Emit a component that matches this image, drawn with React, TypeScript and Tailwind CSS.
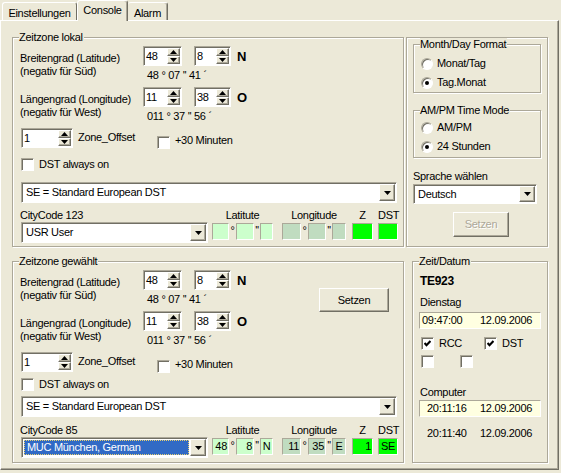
import React from "react";

const sunken =
  "border border-t-[#ACA899] border-l-[#ACA899] border-r-white border-b-white shadow-[inset_1px_1px_0_#716F64]";
const raised =
  "border border-t-white border-l-white border-r-[#716F64] border-b-[#716F64] shadow-[inset_-1px_-1px_0_#ACA899]";
const etched = "border border-[#ACA899] shadow-[inset_1px_1px_0_#fff,1px_1px_0_#fff]";
const thin = "border border-t-[#ACA899] border-l-[#ACA899] border-r-white border-b-white";

function Group({ label, className, children }: { label?: string; className: string; children?: React.ReactNode }) {
  return (
    <div className={`relative ${etched} ${className}`}>
      {label && (
        <span className="absolute -top-[7px] left-[6px] bg-[#ECE9D8] pr-[1px] leading-[13px]">{label}</span>
      )}
      {children}
    </div>
  );
}

function Tri({ up }: { up?: boolean }) {
  return (
    <svg width="7" height="4" viewBox="0 0 7 4">
      <path d={up ? "M3.5 0L7 4H0z" : "M0 0h7L3.5 4z"} fill="black" />
    </svg>
  );
}

function Spin({ value, className }: { value: string; className: string }) {
  return (
    <div className={`flex h-[20px] bg-white ${sunken} ${className}`}>
      <span className="flex-1 pl-[2px] leading-[18px]">{value}</span>
      <div className="flex flex-col w-[13px] my-[1px] mr-[1px]">
        <div className={`flex-1 flex items-center justify-center bg-[#ECE9D8] ${raised}`}>
          <Tri up />
        </div>
        <div className={`flex-1 flex items-center justify-center bg-[#ECE9D8] ${raised}`}>
          <Tri />
        </div>
      </div>
    </div>
  );
}

function Combo({ value, className, selected }: { value: string; className: string; selected?: boolean }) {
  return (
    <div className={`flex bg-white ${sunken} ${className}`}>
      {selected ? (
        <div className="flex-1 m-[2px] mr-[1px] bg-[#316AC5] text-white pl-[2px] leading-[13px] border border-dotted border-[#E8D070] overflow-hidden whitespace-nowrap">
          {value}
        </div>
      ) : (
        <span className="flex-1 pl-[4px] leading-[18px] overflow-hidden whitespace-nowrap">{value}</span>
      )}
      <div className={`w-[16px] my-[1px] mr-[1px] flex items-center justify-center bg-[#ECE9D8] ${raised}`}>
        <svg width="7" height="4" viewBox="0 0 7 4">
          <path d="M0 0h7L3.5 4z" fill="black" />
        </svg>
      </div>
    </div>
  );
}

function Check({ checked, className = "" }: { checked?: boolean; className?: string }) {
  return (
    <div className={`w-[13px] h-[13px] shrink-0 bg-white flex items-center justify-center ${sunken} ${className}`}>
      {checked && (
        <svg width="7" height="7" viewBox="0 0 7 7">
          <path d="M0.5 3L2.5 5.2L6.5 1" stroke="black" strokeWidth="2.2" fill="none" />
        </svg>
      )}
    </div>
  );
}

function Radio({ checked, label, className = "" }: { checked?: boolean; label: string; className?: string }) {
  return (
    <div className={`flex items-center h-[13px] ${className}`}>
      <div className="w-[12px] h-[12px] rounded-full bg-white border border-t-[#ACA899] border-l-[#ACA899] border-r-white border-b-white shadow-[inset_1px_1px_0_#716F64] flex items-center justify-center">
        {checked && <div className="w-[4px] h-[4px] rounded-full bg-black" />}
      </div>
      <span className="ml-[4px]">{label}</span>
    </div>
  );
}

function Cell({ className, children }: { className: string; children?: React.ReactNode }) {
  return <div className={`h-[17px] leading-[15px] px-[1px] ${thin} ${className}`}>{children}</div>;
}

function Sym({ className, children }: { className: string; children?: React.ReactNode }) {
  return <div className={`h-[17px] leading-[15px] text-center ${className}`}>{children}</div>;
}

function CoordRow({ lon, deg, button }: { lon?: boolean; deg: string; button?: boolean }) {
  return (
    <div className="flex h-[41px]">
      <div className="w-[123px] pt-[6px]">
        {lon ? "Längengrad (Longitude)" : "Breitengrad (Latitude)"}
        <br />
        {lon ? "(negativ für West)" : "(negativ für Süd)"}
      </div>
      <div className="flex flex-col w-[110px]">
        <div className="flex items-center">
          <Spin value={lon ? "11" : "48"} className="w-[39px]" />
          <Spin value={lon ? "38" : "8"} className="ml-[12px] w-[37px]" />
          <span className="ml-[6px] font-bold text-[13px] tracking-normal">{lon ? "O" : "N"}</span>
        </div>
        <div className="mt-[3px] pl-[4px]">{deg}</div>
      </div>
      {button && (
        <button className={`ml-[66px] mt-[18px] w-[70px] h-[24px] bg-[#ECE9D8] ${raised}`}>Setzen</button>
      )}
    </div>
  );
}

function CityRow({ label, city, filled }: { label: string; city: string; filled?: boolean }) {
  const lat = "bg-[#CCFFCC]";
  return (
    <div className="flex">
      <div className="flex flex-col ml-[1px]">
        <span className="-ml-[1px]">{label}</span>
        <Combo value={city} selected={filled} className="w-[187px] h-[21px]" />
      </div>
      <div className="flex flex-col ml-[4px]">
        <span className="text-center">Latitute</span>
        <div className="flex mt-[1px]">
          <Cell className={`w-[17px] text-right ${lat}`}>{filled && "48"}</Cell>
          <Sym className="w-[7px]">°</Sym>
          <Cell className={`w-[18px] text-right ${lat}`}>{filled && "8"}</Cell>
          <Sym className="w-[6px]">''</Sym>
          <Cell className={`w-[13px] text-center ${lat}`}>{filled && "N"}</Cell>
        </div>
      </div>
      <div className="flex flex-col ml-[9px]">
        <span className="text-center">Longitude</span>
        <div className="flex mt-[1px]">
          <Cell className="w-[19px] text-right bg-[#C0DCC0]">{filled && "11"}</Cell>
          <Sym className="w-[7px]">°</Sym>
          <Cell className="w-[18px] text-right bg-[#C0DCC0]">{filled && "35"}</Cell>
          <Sym className="w-[6px]">''</Sym>
          <Cell className="w-[14px] text-center bg-[#C0DCC0]">{filled && "E"}</Cell>
        </div>
      </div>
      <div className="flex flex-col ml-[6px]">
        <span className="text-center">Z</span>
        <Cell className="mt-[1px] w-[21px] text-right bg-[#00FF00]">{filled && "1"}</Cell>
      </div>
      <div className="flex flex-col ml-[5px]">
        <span className="text-center">DST</span>
        <Cell className="mt-[1px] w-[20px] text-center bg-[#00FF00]">{filled && "SE"}</Cell>
      </div>
    </div>
  );
}

function ZoneRow() {
  return (
    <div className="flex items-start h-[20px]">
      <Spin value="1" className="ml-[1px] w-[52px]" />
      <span className="ml-[5px] w-[79px] pt-[3px]">Zone_Offset</span>
      <Check className="mt-[8px]" />
      <span className="ml-[5px] mt-[6px]">+30 Minuten</span>
    </div>
  );
}

export default function App() {
  return (
    <div className="w-[561px] h-[473px] bg-[#ECE9D8] text-black text-[11px] leading-[13px] tracking-[-0.3px] font-['Liberation_Sans',Arial,sans-serif] overflow-hidden">
      {/* Tabs */}
      <div className="flex h-[20px] pl-[2px] items-end">
        <div className="w-[75px] h-[18px] pt-[4px] text-center border-t border-l border-r border-t-white border-l-white border-r-[#716F64] rounded-t-[3px]">
          Einstellungen
        </div>
        <div className="relative z-10 -mb-[1px] w-[51px] h-[21px] pt-[3px] text-center bg-[#ECE9D8] border-t border-l border-r border-t-white border-l-white border-r-[#716F64] shadow-[inset_-1px_0_0_#ACA899] rounded-t-[3px]">
          Console
        </div>
        <div className="w-[40px] h-[18px] pt-[4px] text-center border-t border-r border-t-white border-r-[#716F64] shadow-[inset_-1px_0_0_#ACA899] rounded-t-[3px]">
          Alarm
        </div>
      </div>

      {/* Tab page */}
      <div className={`w-[559px] h-[450px] pl-[11px] pt-[16px] ${raised}`}>
        <div className="flex">
          <Group label="Zeitzone lokal" className="w-[392px] h-[210px]">
            <div className="pl-[7px] pt-[8px]">
              <CoordRow deg="48 ° 07 '' 41 ´" />
              <CoordRow lon deg="011 ° 37 '' 56 ´" />
              <ZoneRow />
              <div className="flex items-center mt-[10px]">
                <Check className="ml-[1px]" />
                <span className="ml-[5px]">DST always on</span>
              </div>
              <Combo value="SE = Standard European DST" className="mt-[11px] ml-[1px] w-[376px] h-[21px]" />
              <div className="mt-[6px]">
                <CityRow label="CityCode 123" city="USR User" />
              </div>
            </div>
          </Group>

          <Group className="ml-[2px] w-[142px] h-[210px]">
            <div className="pl-[6px] pt-[6px]">
              <Group label="Month/Day Format" className="w-[128px] h-[49px]">
                <div className="pl-[7px] pt-[12px]">
                  <Radio label="Monat/Tag" />
                  <Radio checked label="Tag.Monat" className="mt-[6px]" />
                </div>
              </Group>
              <Group label="AM/PM Time Mode" className="mt-[17px] w-[128px] h-[48px]">
                <div className="pl-[7px] pt-[10px]">
                  <Radio label="AM/PM" />
                  <Radio checked label="24 Stunden" className="mt-[6px]" />
                </div>
              </Group>
              <div className="mt-[12px]">Sprache wählen</div>
              <Combo value="Deutsch" className="mt-[1px] w-[124px] h-[20px]" />
              <div
                className={`mt-[8px] ml-[40px] w-[56px] h-[25px] flex items-center justify-center text-[#ACA899] [text-shadow:1px_1px_0_#fff] ${raised}`}
              >
                Setzen
              </div>
            </div>
          </Group>
        </div>

        <div className="flex mt-[14px]">
          <Group label="Zeitzone gewählt" className="w-[392px] h-[202px]">
            <div className="pl-[7px] pt-[8px]">
              <CoordRow deg="48 ° 07 '' 41 ´" button />
              <CoordRow lon deg="011 ° 37 '' 56 ´" />
              <ZoneRow />
              <div className="flex items-center mt-[6px]">
                <Check className="ml-[1px]" />
                <span className="ml-[5px]">DST always on</span>
              </div>
              <Combo value="SE = Standard European DST" className="mt-[5px] ml-[1px] w-[376px] h-[21px]" />
              <div className="mt-[7px]">
                <CityRow label="CityCode 85" city="MUC München, German" filled />
              </div>
            </div>
          </Group>

          <Group label="Zeit/Datum" className="ml-[8px] w-[136px] h-[202px]">
            <div className="pl-[6px] pt-[13px]">
              <div className="ml-[1px] font-bold text-[12px]">TE923</div>
              <div className="ml-[1px] mt-[8px]">Dienstag</div>
              <div className={`flex mt-[3px] w-[122px] h-[17px] leading-[15px] bg-[#FFFFE1] ${thin}`}>
                <span className="pl-[2px] w-[60px]">09:47:00</span>
                <span>12.09.2006</span>
              </div>
              <div className="flex items-center mt-[8px] ml-[2px]">
                <Check checked />
                <span className="ml-[5px] w-[45px]">RCC</span>
                <Check checked />
                <span className="ml-[5px]">DST</span>
              </div>
              <div className="flex items-center mt-[5px] ml-[2px]">
                <Check />
                <Check className="ml-[26px]" />
              </div>
              <div className="ml-[1px] mt-[18px]">Computer</div>
              <div className={`flex mt-[1px] w-[122px] h-[17px] leading-[15px] bg-[#FFFFE1] ${thin}`}>
                <span className="pl-[7px] w-[60px]">20:11:16</span>
                <span>12.09.2006</span>
              </div>
              <div className="flex mt-[10px]">
                <span className="pl-[8px] w-[61px]">20:11:40</span>
                <span>12.09.2006</span>
              </div>
            </div>
          </Group>
        </div>
      </div>
    </div>
  );
}
